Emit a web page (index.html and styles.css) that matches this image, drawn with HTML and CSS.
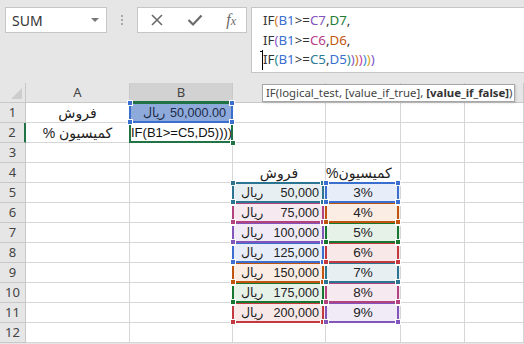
FILE: index.html
```html
<!DOCTYPE html>
<html lang="en">
<head>
  <meta charset="UTF-8" />
  <title>IF formula</title>
  <link rel="stylesheet" href="styles.css">
</head>
<body>
  <div class="ribbon">
    <div class="namebox"><span>SUM</span><span class="caret"></span></div>
    <div class="grip"><i></i><i></i><i></i></div>
    <div class="fnbox">
      <svg class="ico" width="14" height="14" viewBox="0 0 14 14"><path d="M2 2 L12 12 M12 2 L2 12" stroke="#6b6b6b" stroke-width="1.6" fill="none"/></svg>
      <svg class="ico" width="16" height="14" viewBox="0 0 16 14"><path d="M1.5 7 L6 11.5 L14.5 2.5" stroke="#6b6b6b" stroke-width="2.2" fill="none"/></svg>
      <span class="fx"><i>f</i><i class="sub">x</i></span>
    </div>
    <div class="fbar">
      <div class="fl">IF<span class="k1">(</span><span class="blue">B1</span>&gt;=<span class="purple">C7</span>,<span class="green">D7</span>,</div>
      <div class="fl">IF<span class="k2">(</span><span class="blue">B1</span>&gt;=<span class="magenta">C6</span>,<span class="orange">D6</span>,</div>
      <div class="fl"><span class="cursor"></span>IF<span class="k3">(</span><span class="blue">B1</span>&gt;=<span class="teal">C5</span>,<span class="blue">D5</span><span class="k3">)</span><span class="k2">)</span><span class="k1">)</span><span class="k4">)</span><span class="k5">)</span><span class="k6">)</span><span class="k7">)</span></div>
    </div>
  </div>

  <div class="sheet">
    <div class="h corner"></div><div class="h">A</div><div class="h active">B</div><div class="h"></div><div class="h"></div><div class="h"></div><div class="h"></div>

    <div class="rh">1</div>
    <div class="c ar">فروش</div>
    <div class="c b1"><span class="box blue-b"><b class="k tl"></b><b class="k tr"></b><b class="k bl"></b><b class="k br"></b></span><span class="txt cur">ريال</span><span class="txt num">50,000.00</span></div>
    <div class="c"></div><div class="c"></div><div class="c"></div><div class="c"></div>

    <div class="rh sel">2</div>
    <div class="c ar">كميسيون %</div>
    <div class="c b2"><span class="sel-box"><b class="handle"></b></span><span class="edit">IF(B1&gt;=C5,D5)))))))</span></div>
    <div class="c"></div><div class="c"></div><div class="c"></div><div class="c"></div>

    <div class="rh">3</div>
    <div class="c"></div><div class="c"></div><div class="c"></div><div class="c"></div><div class="c"></div><div class="c"></div>

    <div class="rh">4</div>
    <div class="c"></div><div class="c"></div>
    <div class="c ar">فروش</div>
    <div class="c ar tight">كميسيون%</div>
    <div class="c"></div><div class="c"></div>

    <div class="rh">5</div>
    <div class="c"></div><div class="c"></div>
    <div class="c money z7"><span class="box teal-b"><b class="k tl"></b><b class="k tr"></b><b class="k bl"></b><b class="k br"></b></span><span class="txt cur">ريال</span><span class="txt num">50,000</span></div>
    <div class="c pct z7"><span class="box blue-b"><b class="k tl"></b><b class="k tr"></b><b class="k bl"></b><b class="k br"></b></span><span class="txt">3%</span></div>
    <div class="c"></div><div class="c"></div>

    <div class="rh">6</div>
    <div class="c"></div><div class="c"></div>
    <div class="c money z6"><span class="box magenta-b"><b class="k tl"></b><b class="k tr"></b><b class="k bl"></b><b class="k br"></b></span><span class="txt cur">ريال</span><span class="txt num">75,000</span></div>
    <div class="c pct z6"><span class="box orange-b"><b class="k tl"></b><b class="k tr"></b><b class="k bl"></b><b class="k br"></b></span><span class="txt">4%</span></div>
    <div class="c"></div><div class="c"></div>

    <div class="rh">7</div>
    <div class="c"></div><div class="c"></div>
    <div class="c money z5"><span class="box purple-b"><b class="k tl"></b><b class="k tr"></b><b class="k bl"></b><b class="k br"></b></span><span class="txt cur">ريال</span><span class="txt num">100,000</span></div>
    <div class="c pct z5"><span class="box green-b"><b class="k tl"></b><b class="k tr"></b><b class="k bl"></b><b class="k br"></b></span><span class="txt">5%</span></div>
    <div class="c"></div><div class="c"></div>

    <div class="rh">8</div>
    <div class="c"></div><div class="c"></div>
    <div class="c money z4"><span class="box blue-b"><b class="k tl"></b><b class="k tr"></b><b class="k bl"></b><b class="k br"></b></span><span class="txt cur">ريال</span><span class="txt num">125,000</span></div>
    <div class="c pct z4"><span class="box red-b"><b class="k tl"></b><b class="k tr"></b><b class="k bl"></b><b class="k br"></b></span><span class="txt">6%</span></div>
    <div class="c"></div><div class="c"></div>

    <div class="rh">9</div>
    <div class="c"></div><div class="c"></div>
    <div class="c money z3"><span class="box orange-b"><b class="k tl"></b><b class="k tr"></b><b class="k bl"></b><b class="k br"></b></span><span class="txt cur">ريال</span><span class="txt num">150,000</span></div>
    <div class="c pct z3"><span class="box teal-b"><b class="k tl"></b><b class="k tr"></b><b class="k bl"></b><b class="k br"></b></span><span class="txt">7%</span></div>
    <div class="c"></div><div class="c"></div>

    <div class="rh">10</div>
    <div class="c"></div><div class="c"></div>
    <div class="c money z2"><span class="box green-b"><b class="k tl"></b><b class="k tr"></b><b class="k bl"></b><b class="k br"></b></span><span class="txt cur">ريال</span><span class="txt num">175,000</span></div>
    <div class="c pct z2"><span class="box magenta-b"><b class="k tl"></b><b class="k tr"></b><b class="k bl"></b><b class="k br"></b></span><span class="txt">8%</span></div>
    <div class="c"></div><div class="c"></div>

    <div class="rh">11</div>
    <div class="c"></div><div class="c"></div>
    <div class="c money z1"><span class="box red-b"><b class="k tl"></b><b class="k tr"></b><b class="k bl"></b><b class="k br"></b></span><span class="txt cur">ريال</span><span class="txt num">200,000</span></div>
    <div class="c pct z1"><span class="box purple-b"><b class="k tl"></b><b class="k tr"></b><b class="k bl"></b><b class="k br"></b></span><span class="txt">9%</span></div>
    <div class="c"></div><div class="c"></div>

    <div class="rh">12</div>
    <div class="c"></div><div class="c"></div><div class="c"></div><div class="c"></div><div class="c"></div><div class="c"></div>
  </div>

  <div class="tip">IF(logical_test, [value_if_true], <b>[value_if_false]</b>)</div>
</body>
</html>
```

FILE: styles.css
```css
body {
  margin: 0;
  background: #e6e6e6;
  font-family: "Noto Sans", "DejaVu Sans", sans-serif;
  color: #222;
  overflow: hidden;
}
.ribbon {
  display: flex;
  align-items: flex-start;
  height: 83px;
  padding-top: 7px;
  padding-left: 5px;
  box-sizing: border-box;
}
.namebox {
  width: 102px;
  height: 26px;
  box-sizing: border-box;
  background: #fff;
  border: 1px solid #c6c6c6;
  display: flex;
  align-items: center;
  justify-content: space-between;
  padding: 0 7px 0 6px;
  font-size: 14px;
  color: #333;
}
.caret {
  width: 0;
  height: 0;
  border-left: 4px solid transparent;
  border-right: 4px solid transparent;
  border-top: 4px solid #777;
}
.grip {
  width: 30px;
  height: 26px;
  display: flex;
  flex-direction: column;
  align-items: center;
  justify-content: center;
  gap: 2px;
}
.grip i {
  width: 2px;
  height: 2px;
  background: #a8a8a8;
}
.fnbox {
  width: 110px;
  height: 26px;
  box-sizing: border-box;
  background: #fff;
  border: 1px solid #c6c6c6;
  display: flex;
  align-items: center;
  justify-content: space-between;
  padding: 0 10px 0 12px;
}
.fx {
  font-family: "Liberation Serif", serif;
  color: #6b6b6b;
  font-size: 16px;
}
.fx .sub {
  font-size: 12px;
}
.fbar {
  flex: 1;
  height: 66px;
  margin-left: 4px;
  margin-right: -1px;
  box-sizing: border-box;
  background: #fff;
  border: 1px solid #c6c6c6;
  padding: 3px 0 0 11px;
  font-size: 13.3px;
  color: #333;
}
.fl {
  height: 19.5px;
  line-height: 19px;
  position: relative;
}
.cursor {
  position: absolute;
  left: -1px;
  top: 0;
  height: 20px;
  border-left: 1px solid #000;
}
.cursor::before {
  content: "";
  position: absolute;
  left: -3px;
  top: 1px;
  width: 3px;
  height: 1px;
  background: #000;
}
.blue { color: #3a6fd0; }
.purple { color: #8454bd; }
.green { color: #1c7c35; }
.magenta { color: #b8408a; }
.orange { color: #c4560f; }
.teal { color: #2c7b96; }
.k1 { color: #d17a1a; }
.k2 { color: #8c55c6; }
.k3 { color: #2c8c8a; }
.k4 { color: #c23f9a; }
.k5 { color: #3d8ad6; }
.k6 { color: #d6a31c; }
.k7 { color: #7a56c8; }

.sheet {
  display: grid;
  grid-template-columns: 26px 104px 103px 93px 75px 64px 1fr;
  grid-auto-rows: 20px;
  background: #fff;
  font-family: "Liberation Sans", "DejaVu Sans", sans-serif;
  font-size: 13.5px;
}
.h, .rh {
  background: #e6e6e6;
  border-right: 1px solid #c8c8c8;
  border-bottom: 1px solid #c8c8c8;
  box-sizing: border-box;
  color: #444;
  text-align: center;
  line-height: 19px;
  font-family: "Noto Sans", sans-serif;
  font-size: 13px;
}
.h.active {
  background: #d2d2d2;
  border-bottom: 2px solid #217346;
}
.rh.sel {
  border-right: 2px solid #217346;
}
.corner {
  position: relative;
}
.corner::after {
  content: "";
  position: absolute;
  right: 3px;
  bottom: 3px;
  border-left: 11px solid transparent;
  border-bottom: 11px solid #cdcdcd;
}
.c {
  position: relative;
  border-right: 1px solid #d6d6d6;
  border-bottom: 1px solid #d6d6d6;
  box-sizing: border-box;
  line-height: 20px;
  white-space: nowrap;
}
.ar {
  direction: rtl;
  text-align: center;
  font-size: 14px;
}
.tight {
  text-align: left;
  font-size: 14px;
  letter-spacing: -0.2px;
}
.money {
  display: flex;
  justify-content: space-between;
  padding: 0 6px 0 8px;
}
.pct {
  text-align: center;
}
.b1 {
  display: flex;
  justify-content: space-between;
  padding: 0 6px 0 13px;
  background: #8eaadb;
  color: #1d2b48;
  z-index: 3;
}
.b2 {
  z-index: 2;
}
.edit {
  position: relative;
  display: block;
  overflow: hidden;
  padding-left: 1px;
  margin-right: 1px;
  font-size: 13px;
  color: #111;
}
.cur {
  font-size: 12.5px;
}
.num {
  font-size: 12.6px;
}
.txt {
  position: relative;
}
.box, .sel-box {
  position: absolute;
  top: -1px;
  left: -1px;
  right: 1px;
  bottom: -1px;
  border: 2px solid;
}
.sel-box {
  top: 0;
  right: -1px;
  border-color: #217346;
  border-top: none;
}
.b1 .box {
  right: -1px;
  border-top-color: #217346;
}
.handle {
  position: absolute;
  right: -4px;
  bottom: -4px;
  width: 4px;
  height: 4px;
  background: #217346;
  box-shadow: 0 0 0 1px #fff;
}
.k {
  position: absolute;
  width: 4px;
  height: 4px;
  background: currentColor;
  box-shadow: 0 0 0 1px #fff;
}
.k.tl { left: -3px; top: -3px; }
.k.tr { right: -3px; top: -3px; }
.k.bl { left: -3px; bottom: -3px; }
.k.br { right: -3px; bottom: -3px; }

.z7 { z-index: 7; }
.z6 { z-index: 6; }
.z5 { z-index: 5; }
.z4 { z-index: 4; }
.z3 { z-index: 3; }
.z2 { z-index: 2; }
.z1 { z-index: 1; }

.blue-b { color: #3a6fd0; border-color: #3a6fd0; }
.teal-b { color: #2c7592; border-color: #2c7592; }
.magenta-b { color: #b3437f; border-color: #b3437f; }
.orange-b { color: #c0540f; border-color: #c0540f; }
.purple-b { color: #8255b8; border-color: #8255b8; }
.green-b { color: #17762f; border-color: #17762f; }
.red-b { color: #c23a3f; border-color: #c23a3f; }

.money.z7 { background: #e7eff3; }
.pct.z7 { background: #e8eef9; }
.money.z6 { background: #f6e9f0; }
.pct.z6 { background: #fbede4; }
.money.z5 { background: #f0ebf7; }
.pct.z5 { background: #e6f1e8; }
.money.z4 { background: #e8eef9; }
.pct.z4 { background: #f8e8e8; }
.money.z3 { background: #fbede4; }
.pct.z3 { background: #e7eff3; }
.money.z2 { background: #e6f1e8; }
.pct.z2 { background: #f6e9f0; }
.money.z1 { background: #f8e8e8; }
.pct.z1 { background: #f0ebf7; }

.tip {
  position: absolute;
  left: 262px;
  top: 84px;
  width: 253px;
  height: 18px;
  box-sizing: border-box;
  background: #fff;
  border: 1px solid #a6a6a6;
  box-shadow: 1px 1px 2px rgba(0,0,0,0.15);
  font-size: 11.4px;
  line-height: 16px;
  padding-left: 3px;
  color: #444;
  white-space: nowrap;
  z-index: 10;
}
.tip b {
  color: #333;
}
```
